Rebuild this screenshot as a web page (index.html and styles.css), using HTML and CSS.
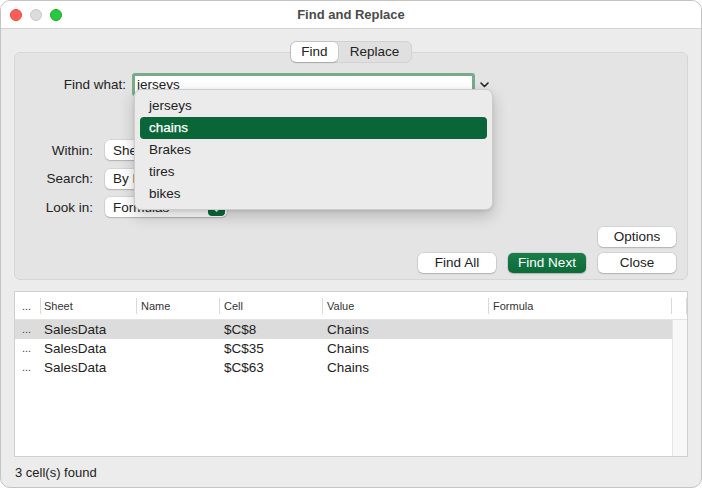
FILE: index.html
```html
<!DOCTYPE html>
<html>
<head>
<meta charset="utf-8">
<link rel="stylesheet" href="styles.css">
</head>
<body>
<div class="window">
  <div class="titlebar">
    <div class="lights"><span class="light red"></span><span class="light gray"></span><span class="light green"></span></div>
    <div class="title">Find and Replace</div>
    <div></div>
  </div>
  <div class="content">
    <div class="tabs">
      <div class="seg"><span class="seg-item find active">Find</span><span class="seg-item replace">Replace</span></div>
    </div>
    <div class="panel">
      <div class="find-row">
        <span class="find-label">Find what:</span>
        <div class="find-field">
          <div class="input">jerseys</div>
          <div class="popup">
            <div class="pop-item">jerseys</div>
            <div class="pop-item sel">chains</div>
            <div class="pop-item">Brakes</div>
            <div class="pop-item">tires</div>
            <div class="pop-item">bikes</div>
          </div>
        </div>
        <svg class="combo-caret" width="9" height="6" viewBox="0 0 9 6"><path d="M1 1 L4.5 4.5 L8 1" fill="none" stroke="#222" stroke-width="1.6" stroke-linecap="round" stroke-linejoin="round"/></svg>
      </div>
      <div class="opt-rows">
        <div class="opt-row"><span class="opt-label">Within:</span><div class="select"><span>Sheet</span><span class="sel-btn"><svg width="9" height="12" viewBox="0 0 9 12"><path d="M2 4.5 L4.5 2 L7 4.5 M2 7.5 L4.5 10 L7 7.5" fill="none" stroke="#fff" stroke-width="1.6" stroke-linecap="round" stroke-linejoin="round"/></svg></span></div></div>
        <div class="opt-row"><span class="opt-label">Search:</span><div class="select"><span>By Rows</span><span class="sel-btn"><svg width="9" height="12" viewBox="0 0 9 12"><path d="M2 4.5 L4.5 2 L7 4.5 M2 7.5 L4.5 10 L7 7.5" fill="none" stroke="#fff" stroke-width="1.6" stroke-linecap="round" stroke-linejoin="round"/></svg></span></div></div>
        <div class="opt-row"><span class="opt-label">Look in:</span><div class="select"><span>Formulas</span><span class="sel-btn"><svg width="9" height="12" viewBox="0 0 9 12"><path d="M2 4.5 L4.5 2 L7 4.5 M2 7.5 L4.5 10 L7 7.5" fill="none" stroke="#fff" stroke-width="1.6" stroke-linecap="round" stroke-linejoin="round"/></svg></span></div></div>
      </div>
      <div class="btn-grid">
        <div class="btn options">Options</div>
        <div class="btn">Find All</div>
        <div class="btn primary">Find Next</div>
        <div class="btn">Close</div>
      </div>
    </div>
    <div class="results">
      <div class="thead">
        <div class="th c0">...</div>
        <div class="th c1">Sheet</div>
        <div class="th c2">Name</div>
        <div class="th c3">Cell</div>
        <div class="th c4">Value</div>
        <div class="th c5">Formula</div>
        <div class="th c6"></div>
      </div>
      <div class="tbody">
        <div class="rows">
          <div class="row selected"><span class="td c0 dots">...</span><span class="td c1">SalesData</span><span class="td c2"></span><span class="td c3">$C$8</span><span class="td c4">Chains</span><span class="td c5"></span></div>
          <div class="row"><span class="td c0 dots">...</span><span class="td c1">SalesData</span><span class="td c2"></span><span class="td c3">$C$35</span><span class="td c4">Chains</span><span class="td c5"></span></div>
          <div class="row"><span class="td c0 dots">...</span><span class="td c1">SalesData</span><span class="td c2"></span><span class="td c3">$C$63</span><span class="td c4">Chains</span><span class="td c5"></span></div>
        </div>
        <div class="scroll"></div>
      </div>
    </div>
    <div class="status">3 cell(s) found</div>
  </div>
</div>
</body>
</html>
```
FILE: styles.css
```css
html, body {
  margin: 0;
  padding: 0;
  background: #ffffff;
}
.window {
  width: 702px;
  height: 488px;
  box-sizing: border-box;
  border: 1px solid #c4c4c4;
  border-radius: 10px;
  overflow: hidden;
  background: #ececec;
  display: flex;
  flex-direction: column;
  font-family: "Liberation Sans", Arial, sans-serif;
  font-size: 13.5px;
  color: #222;
}
.titlebar {
  flex: none;
  height: 27px;
  background: #fff;
  border-bottom: 1px solid #d3d3d3;
  display: grid;
  grid-template-columns: 1fr auto 1fr;
  align-items: center;
}
.lights {
  display: flex;
  gap: 8px;
  padding-left: 9px;
}
.light {
  width: 12px;
  height: 12px;
  border-radius: 50%;
  box-sizing: border-box;
}
.light.red { background: #ff5f57; border: 0.5px solid #e2463f; }
.light.gray { background: #dcdcdc; border: 1px solid #c8c8c8; }
.light.green { background: #28c840; border: 0.5px solid #1aab29; }
.title {
  font-weight: bold;
  font-size: 13px;
  color: #4a4a4a;
}
.content {
  flex: 1;
  padding: 12px 13px 0;
  display: flex;
  flex-direction: column;
}
.tabs {
  position: relative;
  z-index: 1;
  display: flex;
  justify-content: center;
}
.seg {
  display: flex;
  background: #e0e0e0;
  border: 1px solid #d2d2d2;
  border-radius: 6px;
  height: 20px;
}
.seg-item {
  line-height: 20px;
  text-align: center;
  font-size: 13.5px;
  color: #222;
}
.seg-item.find { width: 47px; }
.seg-item.replace { width: 73px; }
.seg-item.active {
  background: #fff;
  border-radius: 5px;
  box-shadow: 0 0 0 0.5px rgba(0,0,0,0.14), 0 1px 1.5px rgba(0,0,0,0.14);
}
.panel {
  margin-top: -11px;
  border: 1px solid #d6d6d6;
  border-radius: 6px;
  background: #e4e4e4;
  padding: 20px 11px 6px 0;
  display: flex;
  flex-direction: column;
}
.find-row {
  display: flex;
  align-items: center;
  height: 23px;
}
.find-label {
  width: 111px;
  text-align: right;
  margin-right: 6px;
}
.find-field {
  position: relative;
}
.input {
  width: 343px;
  height: 23px;
  box-sizing: border-box;
  border: 3px solid #78ab8c;
  border-radius: 3px;
  background: #fff;
  padding-left: 2px;
  line-height: 17px;
}
.combo-caret {
  margin-left: 5px;
}
.popup {
  position: absolute;
  left: 2px;
  top: 16px;
  width: 359px;
  box-sizing: border-box;
  padding: 5px 5px 4px;
  background: #ebebeb;
  border: 1px solid #cdcdcd;
  border-radius: 7px;
  box-shadow: 0 6px 16px rgba(0,0,0,0.2), 0 1px 3px rgba(0,0,0,0.1);
  z-index: 10;
}
.pop-item {
  height: 22px;
  line-height: 22px;
  padding-left: 9px;
  border-radius: 4px;
  color: #222;
}
.pop-item.sel {
  background: #0a6638;
  color: #fff;
  -webkit-text-stroke: 0.25px #fff;
}
.opt-rows {
  margin-top: 44px;
  display: flex;
  flex-direction: column;
  gap: 8.5px;
}
.opt-row {
  display: flex;
  align-items: center;
  height: 20px;
}
.opt-label {
  width: 78px;
  text-align: right;
  margin-right: 12px;
}
.select {
  width: 122px;
  height: 20px;
  box-sizing: border-box;
  background: #fff;
  border-radius: 5px;
  box-shadow: 0 0 0 0.5px rgba(0,0,0,0.12), 0 1px 1.5px rgba(0,0,0,0.18);
  display: flex;
  align-items: center;
  justify-content: space-between;
  padding: 0 2px 0 8px;
}
.sel-btn {
  width: 17px;
  height: 17px;
  border-radius: 4px;
  background: linear-gradient(#157844, #0b6838);
  display: flex;
  align-items: center;
  justify-content: center;
}
.btn-grid {
  margin-top: 10px;
  align-self: flex-end;
  display: grid;
  grid-template-columns: repeat(3, 78px);
  column-gap: 12px;
  row-gap: 6px;
}
.btn {
  height: 20px;
  line-height: 20px;
  text-align: center;
  background: #fff;
  border-radius: 5px;
  box-shadow: 0 0 0 0.5px rgba(0,0,0,0.14), 0 1px 1.5px rgba(0,0,0,0.16);
}
.btn.options {
  grid-column: 3;
}
.btn.primary {
  background: linear-gradient(#1b7d49, #0c6a39);
  color: #fff;
}
.results {
  margin-top: 11px;
  height: 166px;
  box-sizing: border-box;
  border: 1px solid #cfcfcf;
  background: #fff;
  display: flex;
  flex-direction: column;
}
.thead {
  flex: none;
  height: 27px;
  border-bottom: 1px solid #e3e3e3;
  display: grid;
  grid-template-columns: 26px 96px 83px 103px 166px 183px 15px;
  font-size: 11px;
  color: #333;
}
.th {
  display: flex;
  align-items: center;
  padding-left: 4px;
}
.th::after {
  content: "";
  margin-left: auto;
  width: 1px;
  height: 16px;
  background: #d9d9d9;
}
.th.c0 { padding-left: 7px; }
.th.c1 { padding-left: 3px; }
.th.c6 { padding-left: 0; }
.tbody {
  flex: 1;
  display: flex;
}
.rows {
  width: 657px;
}
.row {
  display: grid;
  grid-template-columns: 26px 96px 83px 103px 166px 183px;
  height: 19px;
  line-height: 19px;
}
.row.selected {
  background: #dcdcdc;
}
.td {
  padding-left: 4px;
}
.td.c0 { padding-left: 7px; }
.td.c1 { padding-left: 3px; }
.td.dots {
  font-size: 11px;
  color: #444;
}
.scroll {
  width: 15px;
  box-sizing: border-box;
  background: #f8f8f8;
  border-left: 1px solid #e6e6e6;
}
.status {
  flex: 1;
  display: flex;
  align-items: center;
  padding-left: 1px;
  font-size: 13px;
  color: #222;
}
```
